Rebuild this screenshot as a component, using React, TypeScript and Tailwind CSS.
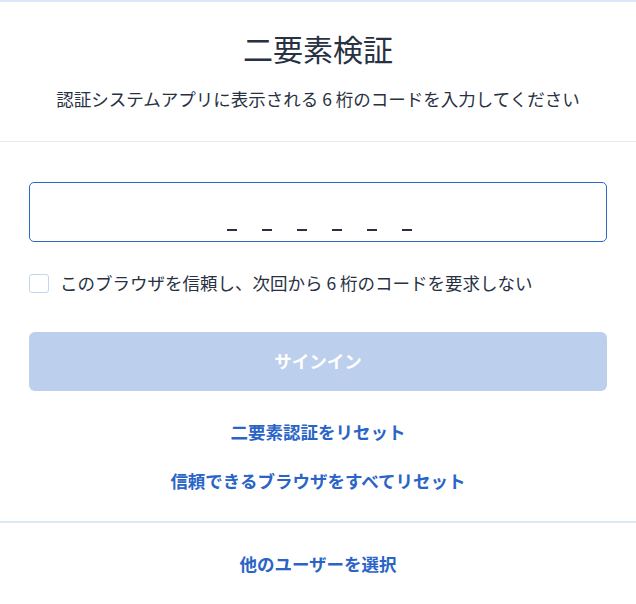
import { useState } from 'react';

const font = { fontFamily: '"Noto Sans CJK JP", "Noto Sans", sans-serif' };

function CodeSlots() {
  return (
    <div className="flex h-[60px] w-full items-end justify-center gap-[25px] rounded-[5px] border border-[#2b67c6] pb-[10px] pl-[2px]">
      {[0, 1, 2, 3, 4, 5].map((i) => (
        <span key={i} className="h-[2px] w-[10px] bg-[#2a3142]" />
      ))}
    </div>
  );
}

export default function App() {
  const [trust, setTrust] = useState(false);

  return (
    <div style={font} className="min-h-[604px] w-full border-t-2 border-[#dce6f5] bg-white text-[#283142]">
      {/* Header */}
      <div className="flex flex-col items-center border-b border-[#e6ebf2] pb-[29px] pt-[26px]">
        <h1 className="text-[30px] leading-[40px] font-normal">二要素検証</h1>
        <p className="mt-[18px] text-[17.5px] leading-[26px]">
          認証システムアプリに表示される 6 桁のコードを入力してください
        </p>
      </div>

      {/* Form */}
      <div className="flex flex-col px-[29px] pt-[40px]">
        <CodeSlots />

        <label className="mt-[28px] flex h-[26px] cursor-pointer items-center gap-[11px]">
          <span
            onClick={() => setTrust(!trust)}
            className={`h-[19px] w-[20px] rounded-[3px] border ${
              trust ? 'border-[#2b67c6] bg-[#2b67c6]' : 'border-[#c3d5ef] bg-white'
            }`}
          />
          <span className="text-[17.5px] leading-[26px]">
            このブラウザを信頼し、次回から 6 桁のコードを要求しない
          </span>
        </label>

        <button className="mt-[36px] h-[59px] w-full rounded-[6px] bg-[#bccfec] text-[17.5px] font-bold text-white">
          サインイン
        </button>

        <a className="mt-[28px] text-center text-[17.5px] leading-[26px] font-bold text-[#2a64c6]">
          二要素認証をリセット
        </a>
        <a className="mt-[23px] text-center text-[17.5px] leading-[26px] font-bold text-[#2a64c6]">
          信頼できるブラウザをすべてリセット
        </a>
      </div>

      {/* Footer */}
      <div className="mt-[27px] border-t-2 border-[#dde7f5] pt-[28px] text-center">
        <a className="text-[17.5px] leading-[26px] font-bold text-[#2a64c6]">他のユーザーを選択</a>
      </div>
    </div>
  );
}
